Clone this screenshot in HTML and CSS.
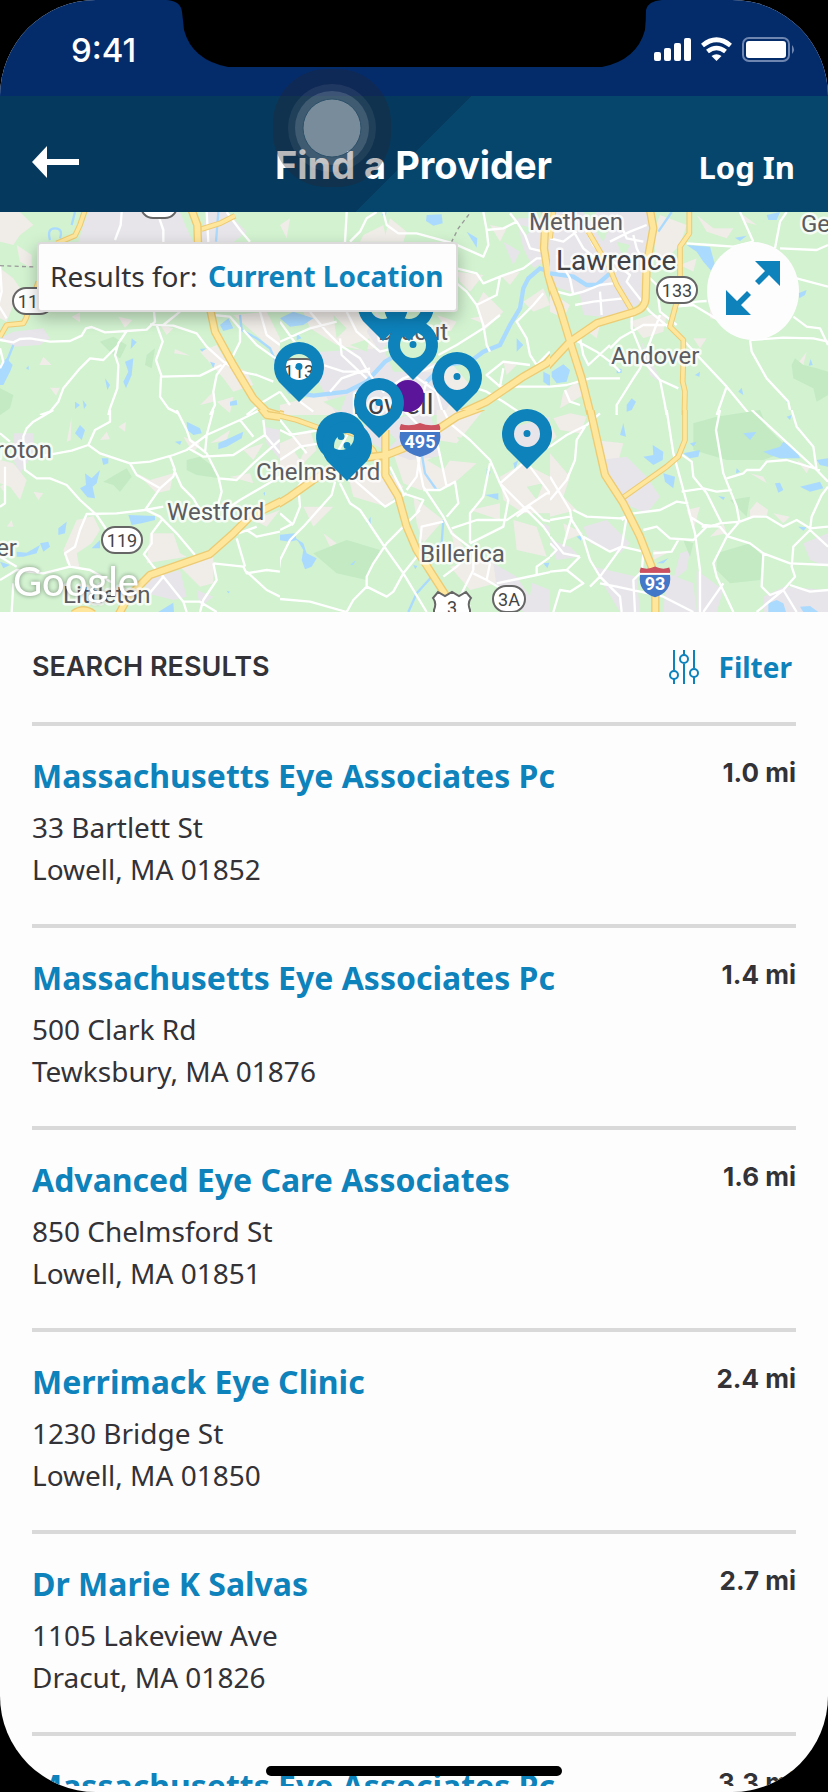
FILE: index.html
```html
<!DOCTYPE html>
<html lang="en">
<head>
<meta charset="utf-8">
<meta name="viewport" content="width=device-width, initial-scale=1">
<title>Find a Provider</title>
<link rel="stylesheet" href="styles.css">
</head>
<body>
<div class="screen">
  <div class="status">
    <span class="time">9:41</span>
    <svg class="status-icons" width="138" height="28" viewBox="652 36 138 28" aria-hidden="true">
      <g fill="#fff">
        <rect x="653" y="52" width="7" height="9" rx="2"/><rect x="663" y="48" width="7" height="13" rx="2"/>
        <rect x="673" y="43" width="7" height="18" rx="2"/><rect x="683" y="38" width="7" height="23" rx="2"/>
        <path d="M715.500 61l-5-5q5-3.500 10 0z"/>
        <rect x="745" y="41" width="40" height="17" rx="3"/>
      </g>
      <g fill="none" stroke="#fff" stroke-width="4.600"><path d="M701.500 45.500q14-11.500 28 0"/><path d="M706.500 51.500q9-7 18 0"/></g>
      <rect x="742" y="38" width="46" height="23" rx="6" fill="none" stroke="#6f86b0" stroke-width="2"/>
      <path d="M791 45q4 4.500 0 9z" fill="#6f86b0"/>
    </svg>
  </div>
  <header class="bar">
    <button class="back" aria-label="Back"><svg width="48" height="32" viewBox="0 0 48 32"><path d="M0 16L15 0v13h32v6H15v13z" fill="#fff"/></svg></button>
    <h1>Find a Provider</h1>
    <a class="login" href="#">Log In</a>
  </header>

  <section class="map" aria-label="Map">
    <svg class="map-art" viewBox="0 212 828 400" preserveAspectRatio="xMidYMid slice">
      <defs>
        <path id="pin" fill-rule="evenodd" d="M0 35L-20 15A25 25 0 1 1 20 15ZM0-13A13 13 0 1 0 0 13A13 13 0 1 0 0-13ZM0-4A3.500 3.500 0 1 1 0 3A3.500 3.500 0 1 1 0-4Z"/>
        <g id="interstate"><path d="M-19-15Q-10-12 0-16Q10-12 19-15Q21-11 20-9H-20Q-21-11-19-15Z" fill="#cb5060"/><path d="M-20-7H20Q23 12 0 18Q-23 12-20-7Z" fill="#4378c8"/><path d="M-20-8H20" stroke="#fff" stroke-width="2"/></g>
      </defs>
      <rect y="205" width="828" height="410" fill="#d2f2d0"/>

      <svg x="0" y="205" width="280" height="210" viewBox="0 0 840 630">
        <path class="town" d="M265 21H540L560 70L580 112H235L250 60ZM0 400L40 380L130 370L150 400L120 420L40 425ZM620 21H680L740 80L700 112H600Z"/>
        <path class="sand" d="M0 21H60L100 60L60 90L40 120L0 110ZM50 120L95 150V190L60 170ZM0 190L40 220L60 250L20 350L0 340ZM355 335L397 345L375 368ZM215 335L240 322V352ZM130 455L155 480H118ZM150 548H180L168 572ZM525 432L570 452L522 445ZM600 440L650 420L680 470L740 500L760 540L700 560L670 520ZM480 360L520 370L500 390ZM640 560L600 600L640 590ZM700 330L800 320L840 400V470L780 400ZM650 590L700 575L690 625Z"/>
        <path class="wood" d="M300 410L340 395L380 420L360 460L330 440ZM440 450L465 430L455 490L435 480ZM0 550L40 570L30 610L0 630Z"/>
        <path class="lake" d="M395 400L410 412L392 432ZM375 470L400 460L395 510L378 550L370 530L385 500ZM315 520L330 540L322 555ZM0 480L20 460L38 480L30 500L10 540H0ZM225 590L240 600L225 612ZM248 585L260 600L252 612ZM660 360L685 340L700 370L670 378ZM690 590L710 585L712 600L690 602ZM78 490L86 482V495ZM600 432L618 430L606 440ZM630 470L645 475L640 490Z"/>
        <path class="stream" d="M40 420L22 465M720 330L725 375L770 400L810 430L840 500M225 21L215 60M655 21L648 110M150 105Q140 70 165 70T180 100"/>
        <path class="road" d="M0 405L40 412L60 402L90 400L150 410L210 408L245 392L258 370L275 366L315 382L380 378L440 374L465 350L462 320M380 378L355 415L345 450L355 480L352 550L330 610L325 630M355 420L310 465L270 460L240 490L190 550L175 590L150 620L120 630M450 358L520 362L590 385L620 425L670 470L720 500L770 510L820 530M470 360L488 410L468 465L485 515L600 512L625 500L665 480M483 515L480 575L505 610L535 625M540 320L490 360M680 470L650 510L640 560L645 600L630 630M690 470L720 410V370L690 335L640 330M730 375L770 420L840 470M365 21L362 60L345 105M478 40L490 75V112M620 21L625 112M680 21L720 75L750 110M0 180L5 260L-5 300L20 340M0 430L10 470L0 490M780 320L800 390L840 420M740 630L790 590L840 560"/>
        <path class="edge minor" d="M255 15L240 60L225 92L170 115M605 72L660 55L705 32M115 230L95 290L78 340L70 355L20 360L0 395"/><path class="fill minor" d="M255 15L240 60L225 92L170 115M605 72L660 55L705 32M115 230L95 290L78 340L70 355L20 360L0 395"/>
        <path class="edge" d="M575 15L592 60L594 112M630 310L645 380L700 480L760 580L800 620L840 632"/><path class="fill" d="M575 15L592 60L594 112M630 310L645 380L700 480L760 580L800 620L840 632"/>
        <path class="border" d="M0 182L110 186"/>
      </svg>

      <svg x="280" y="205" width="270" height="210" viewBox="30 0 810 630">
        <path class="sand" d="M360 40L410 80L400 110H340ZM560 200L640 210L600 260L570 230ZM640 260L700 320L640 380L620 300ZM500 330L560 350L540 380ZM760 290L820 250L840 300L790 320ZM600 340L660 330L650 360ZM100 320H260L340 400L300 440L200 420L120 370ZM660 60L710 70L690 110ZM440 480L540 470L600 540L540 630H400ZM30 600L180 560L300 600V630H30ZM700 470L740 480L710 510ZM30 60L60 40L50 100ZM280 90L340 60L350 110H270ZM690 210L750 200L720 240Z"/>
        <path class="town" d="M150 440L340 430L370 500L480 500L560 560L520 630H200L150 540ZM740 40H840V160L790 190L760 130ZM700 110L750 140L730 180ZM320 320L370 400L330 440L290 380Z"/>
        <path class="green" d="M190 330L230 370L200 400ZM240 420L300 400L290 440ZM540 560L580 590L550 610ZM160 590L230 570L210 620ZM750 60L790 70L770 90ZM100 380L150 400L130 430Z"/>
        <path class="lake" d="M470 30L515 28L518 55L490 62L468 48ZM590 80L622 100L620 128ZM30 340L70 320L130 340L100 360L60 365ZM80 385L95 400L80 405ZM740 400L760 420L740 440ZM820 500L840 510V545L820 530ZM335 28L350 21L345 40Z"/>
        <path class="stream wide" d="M870 210L810 190L775 220L760 250L750 310L720 360L690 420L640 440L600 470L520 480L470 530M30 520L60 560L130 572L230 560L290 530L345 470L380 450"/>
        <path class="road" d="M230 21L225 112M320 21L290 40L270 80L240 110M340 21L350 60L385 85L440 85L550 115L640 155L655 120L650 75L640 21M650 75L700 70L740 50L720 25M740 50L765 90L780 130L820 140M560 190L620 205L640 235L690 215L760 190L800 160H840M690 215L680 270L620 300L590 260L560 235M620 300L640 360L650 420L660 440M505 450L560 420L640 370L690 330M820 265L790 300L740 350L770 400L780 450L800 480L840 440M780 480L700 470L650 510L690 545H870M690 545L700 490M120 320L170 380L210 420L270 460L300 510M210 400L215 450L290 520M160 480L220 500H300M180 560L215 520L300 490M90 590L130 620M30 560L60 600M230 320L260 380L330 440L370 430M30 410L120 370L200 350M300 510L340 560L400 520L500 480L540 450M430 510L500 560L520 630M470 530L440 630M590 540L650 560L700 590L760 630M30 350L80 420"/>
        <path class="edge" d="M828 15L822 130L835 210L870 340M870 430L830 475L760 515L650 590L540 640M0 622L40 630"/><path class="fill" d="M828 15L822 130L835 210L870 340M870 430L830 475L760 515L650 590L540 640M0 622L40 630"/>
        <path class="border" d="M597 28L565 70L545 110"/>
      </svg>

      <svg x="550" y="205" width="278" height="210" viewBox="0 0 834 630">
        <path class="town" d="M0 21H300L290 180L275 290L200 340L100 330L90 270L0 240ZM270 400L320 500L340 540L300 510Z"/>
        <path class="green" d="M150 30L180 60L160 110L130 70ZM100 21H140L120 50ZM0 300L30 320L60 400L0 440ZM200 110L240 120L220 160Z"/>
        <path class="sand" d="M330 30L410 60L390 120L320 190L310 80ZM440 30L490 70L550 70L530 100L470 80ZM390 180L440 160L430 200ZM480 300L530 350L480 340ZM430 400L470 400L450 430ZM40 560L80 530L100 570L30 610ZM580 30L620 60L580 50ZM740 480L770 440L760 480ZM300 330L350 330L340 380L280 400L240 350ZM0 260L60 300L40 340L0 320ZM100 370L150 360L140 400ZM540 370L600 400L560 390Z"/>
        <path class="wood" d="M735 460L760 480L800 490L834 500V570L800 590L790 550L730 520L725 480Z"/>
        <path class="lake" d="M410 120L480 125L495 180L490 205L460 170L440 140ZM650 30L690 21L680 45H655ZM5 500L40 478L60 495L50 530L20 535L5 515ZM745 265L770 255L765 270L748 280ZM230 600L245 580L258 590L245 615L230 620ZM200 490L215 492V503L200 505ZM435 510L450 500L448 515ZM565 560L575 548L580 570ZM555 98L590 92L570 108ZM700 575L718 590L712 595ZM776 482L782 462L788 480Z"/>
        <path class="stream wide" d="M0 205L70 215L110 240L140 240L180 205"/><path class="stream" d="M365 21L325 80"/>
        <path class="road" d="M0 255L60 270L100 260L150 240L190 235M20 150L60 220L70 270M100 60L130 120L180 180L200 200M180 110L240 80L290 60M60 60L100 130L150 170M250 90L260 130L285 180M200 30L230 100L280 110M190 170L240 210L230 230L300 320L360 370M150 260L155 330M75 300L130 290L220 280M245 320V370L290 480L330 525L345 600L350 630M90 400L100 450L115 480L180 420M65 400L85 410L140 440L180 470L210 500M360 360H280L210 400L180 430M330 330L270 490L250 520L200 600V630M330 525L385 550M395 400L450 460L530 545L600 630M530 545L500 630M0 545L50 540L120 520L210 520M45 555L60 590L90 600M410 115L480 120L550 125L610 110M570 21L610 110M710 21L690 50L675 130M690 130L800 135L834 120M740 220L834 245M730 335L770 365L810 370L834 420M600 405L670 400L700 398L790 400L834 410M600 405L605 440L650 520L715 590L720 615M375 305L430 300L480 330L530 360L590 400M375 305L440 290L470 288M290 210L320 240L330 320L380 360M0 100L40 110L80 80"/>
        <path class="edge minor" d="M115 80L150 140L175 180L200 240L245 315M418 15V85L390 125V210L380 290L360 365L400 405V470L398 530L405 560L403 640M0 60L50 30M0 100L10 21"/><path class="fill minor" d="M115 80L150 140L175 180L200 240L245 315M418 15V85L390 125V210L380 290L360 365L400 405V470L398 530L405 560L403 640M0 60L50 30M0 100L10 21"/>
        <path class="edge" d="M300 15L310 70L290 180L287 280Q285 310 255 320L140 355L60 410L-10 485M-6 215L30 310L60 410L95 520L125 640"/><path class="fill" d="M300 15L310 70L290 180L287 280Q285 310 255 320L140 355L60 410L-10 485M-6 215L30 310L60 410L95 520L125 640"/>
      </svg>

      <svg x="0" y="410" width="280" height="205" viewBox="0 0 840 615">
        <path class="town" d="M40 70H100V130L60 190L40 150ZM430 510L540 480L560 560L520 570L440 550ZM590 540L640 560L600 590ZM790 50L840 60V150L800 100Z"/>
        <path class="sand" d="M215 20L200 95L212 90ZM300 90L320 65L330 88ZM355 50L378 35L375 65ZM0 150L40 160L80 210L60 270L30 230L0 220ZM230 330L280 318L300 360L275 400L230 430L240 480L200 460L190 420ZM450 370L520 370L540 430L560 440L440 460ZM630 100L690 60L680 90ZM410 190L450 210L520 190L510 240L470 250ZM690 200L750 190L760 220ZM540 470L640 440V520L600 530ZM100 245L130 250L115 270ZM730 120L790 100L760 150ZM760 330L840 300L800 350ZM550 80L600 100L580 130ZM0 230L15 220V250ZM20 350L35 330L40 350Z"/>
        <path class="wood" d="M560 150L600 140L640 170L660 205L590 195L560 180ZM310 215L380 175L395 200L360 245L340 225Z"/>
        <path class="lake" d="M225 70L240 45L255 60L245 90ZM255 190L275 205L300 180L290 220L278 230L285 265L262 262L240 235L258 225ZM305 145H325V160L310 165ZM385 315L465 318V330L425 340L395 345ZM560 35L600 55L605 70L580 75L562 60ZM655 100L730 65L725 85L680 110L655 118ZM525 95L545 93L540 105ZM175 355L200 335L195 370L175 375ZM120 400L145 395L150 410L130 425ZM275 415L300 390V415ZM50 440L50 425L80 428L120 405L110 430L70 440ZM0 455L30 465L10 475ZM475 606L500 590L520 578L522 606ZM790 250L795 245V258ZM680 542L690 545L685 550Z"/>
        <path class="road" d="M160 0L100 35L80 55L70 80V100L75 180L110 205H150L200 225L240 270L290 315L320 360M85 145L170 130L215 122L265 105L285 60L330 35V0M265 105L300 130L390 160L450 155L520 135L560 120L620 75L720 30L780 0M390 160L410 195L480 235L435 300L350 310L260 312L240 360L225 410L195 430L210 470M480 235L520 200L525 180L510 140M435 300L490 290M520 175L545 230L580 265L600 300L640 310M530 0L560 60L570 90L620 130L655 200L665 245L655 280M640 0L620 75L615 130M565 115L610 140L700 135L795 75L790 30M720 30L760 80M655 205L710 210L760 160L840 90M690 290L720 270L840 200M435 298L480 320L530 370L585 435M485 330L455 370V400L430 435M430 430L460 470L490 500L550 575L560 606M490 500L440 560M210 470L270 480L340 520M210 470L130 490L50 480L0 510M50 470L0 440M320 360L330 400M640 460L730 470L740 490L800 480L840 485M640 460L650 510L610 570L600 606M710 385L735 470M715 370L770 350M740 360L770 380L840 365M550 575H600L650 606M740 485L800 540L840 560M15 170V280L0 290M35 606L40 520M0 70L30 95M795 75L840 130"/>
        <path class="edge" d="M350 625L385 560L450 495L630 432L700 370L750 320L850 270M780 -10L800 15L850 22M220 612Q250 590 280 612"/><path class="fill" d="M350 625L385 560L450 495L630 432L700 370L750 320L850 270M780 -10L800 15L850 22M220 612Q250 590 280 612"/>
      </svg>

      <svg x="280" y="410" width="270" height="205" viewBox="30 0 810 615">
        <path class="sand" d="M230 180L340 170L400 230L350 290L250 260ZM100 290L190 290L130 350ZM370 130L520 150L620 160L540 230L450 240L400 220ZM430 260L520 330L460 400L440 340ZM690 200L760 160L840 200V310H760L700 270ZM500 0H640L560 100L500 90ZM600 300L690 280V330ZM540 350L600 440L560 440ZM160 370L200 400L180 410ZM730 330L800 350L830 440L740 420ZM540 470L670 440L680 520L600 540ZM30 100L120 60L140 120L80 180H30ZM280 440L310 430L290 480Z"/>
        <path class="town" d="M240 60L480 0L510 140L420 150L340 120ZM670 460L740 500L840 540V606H760L680 530ZM700 60L840 20V100L760 140ZM820 340L840 350V390Z"/>
        <path class="green" d="M470 150L560 120L520 180ZM560 80L640 100L660 150L600 140ZM540 260L600 240L590 320ZM350 60L380 90L360 110ZM740 500L790 490L780 560ZM700 130L740 140L710 180ZM460 270L500 250L520 300ZM770 230L820 220L800 270ZM640 350L690 350L660 400ZM70 120L110 110L90 150Z"/>
        <path class="wood" d="M130 430L230 390L330 420L290 510L200 490Z"/>
        <path class="lake" d="M25 375L75 370L80 390L60 395L25 390ZM70 380L100 400L110 430L140 445L125 470L105 478L95 450L100 420L85 395ZM240 465L258 450L250 465ZM650 175L662 185L650 210ZM645 255L685 250V270ZM820 460L838 458L832 475ZM430 465L442 468L436 478ZM730 160L745 150L735 180ZM290 340L302 320V350Z"/>
        <path class="stream" d="M455 130L465 190L500 240M520 330L515 400L480 420M485 500L440 550L415 606"/>
        <path class="road" d="M195 215L185 255L100 350L60 390L30 450L20 530M210 220L240 280L270 300L350 420L400 490L470 606M450 300L400 350L350 400L310 460L290 500V530L350 560L370 545L400 490L440 440M30 567L120 575L230 606M290 530L250 570L230 606M230 190L345 290L410 250M440 310L460 270L400 250L360 170M410 240L440 200L450 130M440 130L460 230L520 320L545 370L610 420V480M520 0L540 40L600 90L660 150L690 220L820 350L870 420M660 160L640 260L600 310V400M460 240H510L555 215L565 280L530 320M500 90L530 230M690 220L770 150L870 90M450 400L455 350L520 335M545 355L620 330L710 330L830 250H870M740 320L780 290L820 330L870 340M690 220L715 270L700 350L600 400M610 490L650 510L660 460M870 420L800 470V495L680 520M800 495L870 480M30 60L60 75L150 60M30 150L90 110L150 100M120 180L85 230L90 290L70 340L30 360M30 310L70 345M520 500L560 470L590 440M610 480L570 560L600 590M650 510L700 540M400 0L490 90M780 170L840 250M240 60L200 130L190 200M30 30L110 130"/>
        <path class="edge minor" d="M20 15L80 30L150 55L220 60L270 80L310 120L345 200"/><path class="fill minor" d="M20 15L80 30L150 55L220 60L270 80L310 120L345 200"/>
        <path class="edge" d="M346 60V195L385 260L410 350L440 420L530 560M20 285L60 260L130 210L230 150L350 135L400 115L500 60L560 20L640 -10"/><path class="fill" d="M346 60V195L385 260L410 350L440 420L530 560M20 285L60 260L130 210L230 150L350 135L400 115L500 60L560 20L640 -10"/>
      </svg>

      <svg x="550" y="410" width="278" height="205" viewBox="0 0 834 615">
        <path class="sand" d="M10 25L60 10L110 20L90 70L30 60ZM130 90L220 100L200 170L160 160ZM0 130L60 200L40 260L80 300L0 320ZM600 300L620 275L655 300L650 315L600 320ZM600 190L640 200L650 220ZM410 300L450 290L430 360ZM310 420L350 430L310 450ZM670 310L720 320L700 340ZM480 380L520 340L530 370ZM0 40L20 80L0 100ZM40 340L100 370L50 390ZM740 150L780 170L770 190Z"/>
        <path class="town" d="M150 150L230 140L290 200L330 260L290 310L220 280ZM170 330L240 400L210 430L120 400L100 350ZM0 390L60 410L90 440L20 450ZM130 470L260 500L270 606H210L170 540ZM390 430L420 420L410 480L370 510ZM760 400L834 370V470L780 450ZM440 480L520 540L500 606H440ZM640 560L700 530L834 540V606H640ZM350 490L430 520L440 606H340Z"/>
        <path class="wood" d="M430 40L500 20L630 0L650 50L720 120L640 150L530 150L430 120ZM500 430L600 400L640 440L630 510L540 520L500 480ZM540 270L600 260L590 320ZM400 390L430 400L420 440Z"/>
        <path class="lake" d="M280 140L310 135L308 105L340 125L338 150L310 165ZM340 190L375 200L370 235L345 215ZM400 130L450 120L445 140L420 145ZM420 100L440 95L430 110ZM580 70L620 65L600 90ZM640 125L690 110L700 95L740 120L750 145L690 145L660 135ZM800 150L834 145V170L810 165ZM750 230L810 215L820 235L780 245ZM675 220L690 218L700 240L685 248ZM505 258L525 262L520 270ZM210 75L220 40L228 80ZM80 380L95 375L93 392ZM320 460L355 445L340 460ZM655 580L680 570L700 580L708 606H655ZM750 590L780 588L805 606H760ZM710 20L725 15L720 30ZM560 175L570 185L558 190ZM745 350L770 352L760 362Z"/>
        <path class="road" d="M350 0L370 130L400 240L435 370L450 480V606M510 0L498 60L520 190L560 290L568 335L530 380L490 460L500 500L550 606M605 0L800 180L834 215M725 0L740 50L790 110L800 180M530 205L580 190L590 180H630L650 155L710 150L810 180M390 130L425 155L430 200L470 250L515 340M395 245L460 235L500 245L545 240M415 280L380 275L330 300L250 310L215 330M420 320L460 345L510 350L535 380L600 400L640 430L720 460L834 465M455 350H480L510 340L570 335L610 320H650L700 350L740 330L780 355L834 350M834 230L815 255L785 320L780 360L730 410L725 470L735 500L700 540L620 606M640 430L635 530L660 555L700 540M700 540L740 606M720 525L780 545L834 540M780 360L834 410M280 360L320 350L360 385L430 390L470 350M310 430L365 425L385 390M0 110L50 75L110 45L150 10M105 50L80 90L75 150L50 210L0 270M0 200L60 300L65 330L100 385L120 450L150 500L210 560L215 606M70 300L110 320L210 325L230 320L215 410L150 500L120 530M0 330L60 320M65 320L40 410M0 380L40 430L90 440M100 380L180 425L215 410L280 425M0 485L50 480L90 440M50 480L100 520L60 545L30 540L10 606M150 520L200 530L340 560L430 606M280 430L275 485L250 510L255 606M0 400L20 420L0 440M520 520L460 606"/>
        <path class="edge minor" d="M405 -5V90L385 140L350 170L220 262"/><path class="fill minor" d="M405 -5V90L385 140L350 170L220 262"/>
        <path class="edge" d="M120 -5L165 195L220 280L270 380L305 470L316 520V620"/><path class="fill" d="M120 -5L165 195L220 280L270 380L305 470L316 520V620"/>
      </svg>

      <g class="places">
        <text x="529" y="230">Methuen</text><text x="611" y="364">Andover</text><text x="801" y="232">Georgetown</text>
        <text x="52" y="458" text-anchor="end">Groton</text><text x="167" y="520">Westford</text><text x="256" y="480">Chelmsford</text>
        <text x="420" y="562">Billerica</text><text x="17" y="556" text-anchor="end">Ayer</text><text x="63" y="603">Littleton</text>
        <text x="448" y="340" text-anchor="end">Dracut</text>
        <text class="city" x="556" y="270">Lawrence</text><text class="city" x="353" y="414">Lowell</text>
      </g>
      <g class="badges">
        <rect x="657" y="277" width="40" height="26" rx="13"/><text x="677" y="297">133</text>
        <rect x="102" y="527" width="40" height="26" rx="13"/><text x="122" y="547">119</text>
        <rect x="493" y="586" width="32" height="26" rx="13"/><text x="509" y="606">3A</text>
        <rect x="13" y="288" width="40" height="26" rx="13"/><text x="33" y="308">113</text>
        <rect x="279" y="359" width="40" height="26" rx="13"/><text x="299" y="378">113</text>
        <rect x="141" y="192" width="36" height="26" rx="12"/>
        <path d="M438 592l7 4 7-4 7 4 7-4 5 6q-4 5-1 12v12h-36v-12q3-7-1-12z"/><text x="452" y="614">3</text>
      </g>
      <use href="#interstate" x="420" y="439"/><text class="shield" x="420" y="448">495</text>
      <use href="#interstate" transform="translate(655 581) scale(.75 .9)"/><text class="shield" x="655" y="590">93</text>
      <circle cx="408" cy="396" r="16" fill="#5b159a"/>
      <g fill="#0d82bb">
        <use href="#pin" x="383" y="306"/><use href="#pin" x="409" y="306"/><use href="#pin" x="299" y="367"/>
        <use href="#pin" x="413" y="345"/><use href="#pin" x="457" y="377"/><use href="#pin" x="379" y="403"/>
        <use href="#pin" x="527" y="434"/><use href="#pin" x="341" y="437"/><use href="#pin" x="347" y="446"/>
      </g>
      <text class="google" x="13" y="596">Google</text>
    </svg>
    <div class="map-tools">
      <p class="location">Results for: <a href="#">Current Location</a></p>
      <button class="expand" aria-label="Expand map"><svg width="56" height="56" viewBox="0 0 56 56"><path d="M30 1H55V26L44 15L34 25L30 21L40 11ZM1 30L12 41L22 31L26 35L16 45L26 55H1Z" fill="#0d82bb"/></svg></button>
    </div>
  </section>

  <main class="results">
    <div class="results-head">
      <h2>SEARCH RESULTS</h2>
      <button class="filter"><svg width="30" height="34" viewBox="0 0 30 34" fill="none" stroke="#0d82bb" stroke-width="2"><path d="M5 0v20M5 29v5M15 0v5M15 14v20M25 0v18M25 27v7"/><circle cx="5" cy="25" r="4"/><circle cx="15" cy="9" r="4"/><circle cx="25" cy="23" r="4"/></svg>Filter</button>
    </div>
    <ul class="list">
      <li><div><a href="#">Massachusetts Eye Associates Pc</a><address>33 Bartlett St<br>Lowell, MA 01852</address></div><span class="miles">1.0 mi</span></li>
      <li><div><a href="#">Massachusetts Eye Associates Pc</a><address>500 Clark Rd<br>Tewksbury, MA 01876</address></div><span class="miles">1.4 mi</span></li>
      <li><div><a href="#">Advanced Eye Care Associates</a><address>850 Chelmsford St<br>Lowell, MA 01851</address></div><span class="miles">1.6 mi</span></li>
      <li><div><a href="#">Merrimack Eye Clinic</a><address>1230 Bridge St<br>Lowell, MA 01850</address></div><span class="miles">2.4 mi</span></li>
      <li><div><a href="#">Dr Marie K Salvas</a><address>1105 Lakeview Ave<br>Dracut, MA 01826</address></div><span class="miles">2.7 mi</span></li>
      <li><div><a href="#">Massachusetts Eye Associates Pc</a></div><span class="miles">3.3 mi</span></li>
    </ul>
  </main>

  <svg class="notch" width="496" height="68" viewBox="166 0 496 68" aria-hidden="true"><path d="M167 0Q181 1 182 12Q183 20 184 30Q192 60 228 67H602Q637 60 645 30Q646 20 646 10Q648 1 662 0Z"/></svg>
  <svg class="touch" width="120" height="120" viewBox="0 0 120 120" aria-hidden="true"><rect x="1" y="1" width="118" height="118" rx="54" fill="#28232d" fill-opacity=".33"/><g fill="#fff"><circle cx="60" cy="60" r="44" fill-opacity=".07"/><circle cx="60" cy="60" r="37" fill-opacity=".14"/><circle cx="60" cy="60" r="29" fill-opacity=".3"/></g><circle cx="60" cy="60" r="29" fill="none" stroke="#2c5068"/></svg>
  <div class="home"></div>
</div>
</body>
</html>
```
FILE: styles.css
```css
* { box-sizing: border-box; }
body { margin: 0; background: #000; color: #333237; font-family: "Noto Sans", sans-serif; }
button { padding: 0; border: 0; background: none; font: inherit; color: inherit; cursor: pointer; }
a { color: #0d82bb; text-decoration: none; font-weight: 700; }
svg { display: block; }
h1, h2, p, ul { margin: 0; padding: 0; }

.screen {
  position: relative;
  display: flex;
  flex-direction: column;
  height: 100vh;
  padding-bottom: 6px;
  overflow: hidden;
  border-radius: 96px;
  background: #fefdfe;
}
.status {
  display: flex;
  flex: none;
  justify-content: space-between;
  align-items: center;
  height: 96px;
  padding: 4px 37px 0 71px;
  background: #042c6b;
}
.time { color: #fff; font: 500 33px/40px Inter, sans-serif; }
.status-icons { overflow: visible; }

.bar {
  display: grid;
  grid-template-columns: 1fr auto 1fr;
  align-items: center;
  flex: none;
  height: 116px;
  padding: 22px 33px 0 32px;
  background: linear-gradient(135deg, #053a5e 50%, #07466c 50%);
  color: #fff;
}
.back { justify-self: start; margin-bottom: 6px; }
.bar h1 { font: 700 38px/48px Inter, sans-serif; }
.login { justify-self: end; padding-top: 4px; color: #fff; font-size: 31px; line-height: 42px; }

.map { position: relative; flex: none; height: 400px; overflow: hidden; }
.map-art { width: 100%; height: 100%; }
.sand { fill: #f0ece8; }
.town { fill: #e7e5e9; }
.green { fill: #d2f2d0; }
.wood { fill: #c3eac3; }
.lake { fill: #abdaff; }
.stream { fill: none; stroke: #abdaff; stroke-width: 7; }
.stream.wide { stroke-width: 13; }
.road, .edge, .fill { fill: none; stroke-linejoin: round; }
.road { stroke: #fff; stroke-width: 7; }
.edge { stroke: #edcb73; stroke-width: 25; }
.fill { stroke: #fee79d; stroke-width: 17; }
.edge.minor { stroke-width: 17; }
.fill.minor { stroke-width: 11; }
.border { fill: none; stroke: #999; stroke-width: 4; stroke-dasharray: 12 10; }
.places text {
  fill: #5b5b60;
  stroke: #fff;
  stroke-opacity: .8;
  stroke-width: 5px;
  stroke-linejoin: round;
  paint-order: stroke;
  font: 24px Roboto, sans-serif;
}
.places .city { fill: #414145; font-size: 28px; }
.badges rect, .badges path { fill: #fff; stroke: #666; stroke-width: 2; }
.badges text { fill: #444; font: 18px Roboto, sans-serif; text-anchor: middle; }
.shield { fill: #fff; font: 700 18px Roboto, sans-serif; text-anchor: middle; }
.google { fill: #fff; font: 500 40px Lato, sans-serif; filter: drop-shadow(0 0 2px rgb(0 0 0 / 40%)); }

.map-tools {
  position: absolute;
  inset: 30px 29px auto 37px;
  display: flex;
  justify-content: space-between;
  align-items: flex-start;
}
.location {
  padding: 11px 13px 13px 11px;
  border: 2px solid #dcdadb;
  border-radius: 4px;
  background: #fefdfe;
  box-shadow: 0 6px 16px rgb(0 0 0 / 25%);
  font-size: 28px;
  line-height: 42px;
}
.location a { margin-left: 3px; }
.expand {
  display: grid;
  place-items: center;
  width: 92px;
  height: 98px;
  padding-bottom: 6px;
  border-radius: 50%;
  background: #fefdfe;
}

.results { flex: 1; min-height: 0; padding: 0 32px; overflow-y: auto; scrollbar-width: none; }
.results-head { display: flex; justify-content: space-between; align-items: center; height: 110px; padding-right: 4px; }
.results-head h2 { font: 600 27px/42px Inter, sans-serif; }
.filter { display: flex; align-items: center; gap: 20px; color: #0d82bb; font-size: 28px; font-weight: 700; line-height: 42px; }
.list { list-style: none; }
.list li { display: flex; justify-content: space-between; padding: 28px 0 34px; border-top: 4px solid #d9d9d9; }
.list a { display: block; font-size: 32px; line-height: 44px; }
.list address { margin-top: 8px; font-size: 28px; font-style: normal; line-height: 42px; }
.miles { font: 700 26px/38px Inter, sans-serif; }

.notch { position: absolute; top: 0; left: 50%; transform: translateX(-50%); }
.touch { position: absolute; top: 68px; left: 272px; }
.home { position: absolute; bottom: 16px; left: 50%; width: 296px; height: 10px; border-radius: 5px; background: #000; transform: translateX(-50%); }
```
